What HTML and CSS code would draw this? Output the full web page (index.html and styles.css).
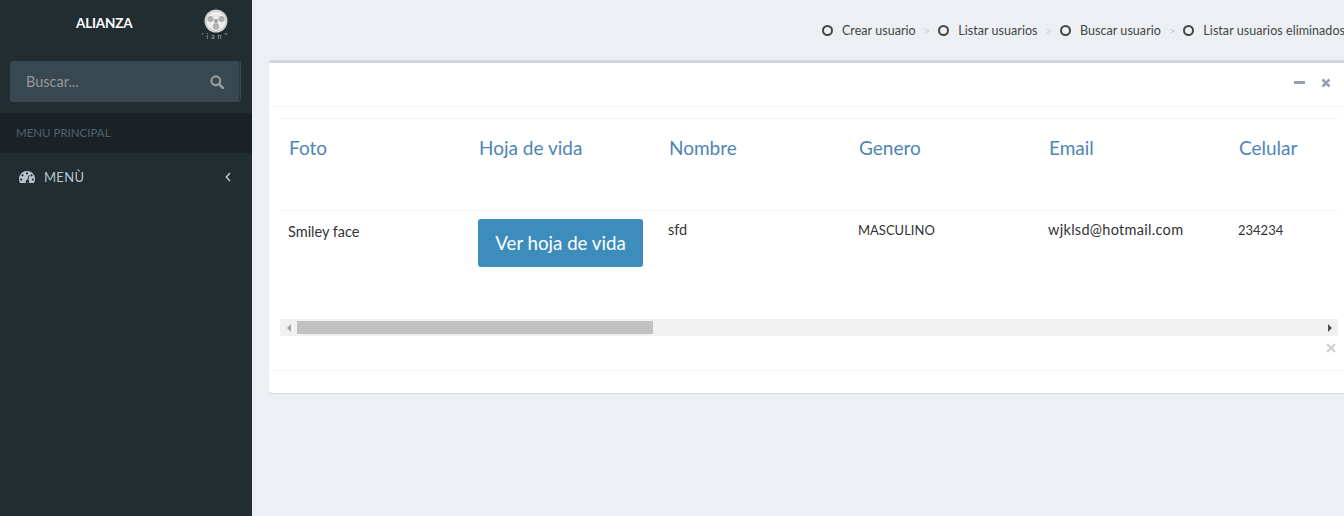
FILE: index.html
```html
<!DOCTYPE html>
<html lang="en">

<head>
    <meta charset="UTF-8">
    <title>Alianza</title>
    <link rel="stylesheet" href="styles.css">
</head>

<body>
    <aside class="sidebar">
        <div class="brand">
            <span class="brand-name">ALIANZA</span>
            <div class="brand-logo">
                <svg class="logo-disc" width="24" height="24" viewBox="0 0 24 24">
                    <circle cx="12" cy="12" r="11.500" fill="#cfcfcf"/>
                    <circle cx="12" cy="12" r="9.500" fill="#ececec"/>
                    <circle cx="6.500" cy="10" r="3" fill="#b0b0b0"/>
                    <circle cx="17.500" cy="10" r="3" fill="#b0b0b0"/>
                    <circle cx="12" cy="17.500" r="3.200" fill="#b0b0b0"/>
                    <circle cx="12" cy="12" r="2" fill="#a0a0a0"/>
                </svg>
                <span class="brand-sub">'ian"</span>
            </div>
        </div>
        <form class="search">
            <span class="search-text">Buscar...</span>
            <svg class="search-icon" width="14" height="14" viewBox="0 0 14 14">
                <circle cx="5.800" cy="5.800" r="4.400" fill="none" stroke="#999" stroke-width="2.200"/>
                <line x1="9" y1="9" x2="13" y2="13" stroke="#999" stroke-width="2.600" stroke-linecap="round"/>
            </svg>
        </form>
        <div class="menu-title">MENU PRINCIPAL</div>
        <div class="menu-item">
            <svg class="menu-icon" width="16" height="14" viewBox="0 0 16 14">
                <path fill="#b8c7ce" fill-rule="evenodd" d="M8 1a8 8 0 0 0-8 8c0 1.500.4 2.900 1.100 4h13.800A8 8 0 0 0 16 9a8 8 0 0 0-8-8zM8 2.300a1.100 1.100 0 1 1 0 2.200 1.100 1.100 0 0 1 0-2.200zM3.500 4.200a1.100 1.100 0 1 1 0 2.200 1.100 1.100 0 0 1 0-2.200zM12.500 4.200a1.100 1.100 0 1 1 0 2.200 1.100 1.100 0 0 1 0-2.200zM2.200 8.500a1.100 1.100 0 1 1 0 2.200 1.100 1.100 0 0 1 0-2.200zM13.800 8.500a1.100 1.100 0 1 1 0 2.200 1.100 1.100 0 0 1 0-2.200zM9.700 5l.9.300-1.300 4.600a1.800 1.800 0 1 1-1-.2z"/>
            </svg>
            <span class="menu-label">MENÙ</span>
            <svg class="menu-arrow" width="6" height="10" viewBox="0 0 6 10">
                <path d="M5 1 1.300 5 5 9" fill="none" stroke="#b8c7ce" stroke-width="1.500"/>
            </svg>
        </div>
    </aside>

    <main class="content">
        <nav class="crumbs">
            <a class="crumb"><i class="dot"></i>Crear usuario</a>
            <span class="sep">&gt;</span>
            <a class="crumb"><i class="dot"></i>Listar usuarios</a>
            <span class="sep">&gt;</span>
            <a class="crumb"><i class="dot"></i>Buscar usuario</a>
            <span class="sep">&gt;</span>
            <a class="crumb"><i class="dot"></i>Listar usuarios eliminados</a>
        </nav>

        <section class="box">
            <div class="box-header">
                <span class="tool-min"></span>
                <svg class="tool-close" width="10" height="10" viewBox="0 0 10 10">
                    <path d="M1.500 1.500l7 7M8.500 1.500l-7 7" stroke="#97a0b3" stroke-width="2.600"/>
                </svg>
            </div>
            <div class="box-body">
                <div class="table-wrap">
                    <table class="users">
                        <thead>
                            <tr>
                                <th>Foto</th>
                                <th>Hoja de vida</th>
                                <th>Nombre</th>
                                <th>Genero</th>
                                <th>Email</th>
                                <th>Celular</th>
                            </tr>
                        </thead>
                        <tbody>
                            <tr>
                                <td class="photo">Smiley face</td>
                                <td><button type="button" class="btn">Ver hoja de vida</button></td>
                                <td>sfd</td>
                                <td class="caps">MASCULINO</td>
                                <td class="email">wjklsd@hotmail.com</td>
                                <td class="caps">234234</td>
                            </tr>
                        </tbody>
                    </table>
                </div>
                <div class="scrollbar">
                    <span class="arrow arrow-left"></span>
                    <div class="track"><div class="thumb"></div></div>
                    <span class="arrow arrow-right"></span>
                </div>
                <div class="close-row">
                    <svg width="10" height="10" viewBox="0 0 10 10">
                        <path d="M1 1l8 8M9 1l-8 8" stroke="#d0d0d0" stroke-width="2.200"/>
                    </svg>
                </div>
            </div>
            <div class="box-footer"></div>
        </section>
    </main>
</body>

</html>
```

FILE: styles.css
```css
html,
body {
    height: 100%;
}

body {
    margin: 0;
    display: flex;
    overflow: hidden;
    font-family: Lato, "Noto Sans", Arial, sans-serif;
    font-size: 14px;
    color: #333;
    background: #ecf0f5;
}

.sidebar {
    width: 252px;
    flex: none;
    background: #222d32;
}

.brand {
    height: 61px;
    display: flex;
    justify-content: space-between;
    padding: 9px 19px 0 76px;
    box-sizing: border-box;
}

.brand-name {
    font-size: 13.500px;
    font-weight: 700;
    letter-spacing: -0.2px;
    color: #fff;
    line-height: 28px;
}

.brand-logo {
    width: 34px;
    display: flex;
    flex-direction: column;
    align-items: center;
}

.logo-disc {
    filter: blur(0.5px);
}

.brand-sub {
    font-size: 7px;
    line-height: 7px;
    letter-spacing: 3px;
    color: #aaa;
}

.search {
    height: 41px;
    margin: 0 11px 11px 10px;
    padding: 0 17px 0 16px;
    display: flex;
    align-items: center;
    justify-content: space-between;
    background: #374850;
    border-radius: 3px;
    box-sizing: border-box;
    box-shadow: inset -1px 0 0 #374850, inset -2px 0 0 #2a363c;
}

.search-text {
    color: #999;
    font-size: 14.500px;
}

.menu-title {
    height: 40px;
    line-height: 40px;
    padding-left: 16px;
    font-size: 11.500px;
    color: #4b646f;
    background: #1a2226;
}

.menu-item {
    height: 48px;
    display: flex;
    align-items: center;
    padding: 0 21px 0 19px;
    color: #b8c7ce;
}

.menu-label {
    margin-left: 9px;
    flex: 1;
    font-size: 13px;
    letter-spacing: 0.3px;
}

.content {
    flex: 1;
    min-width: 0;
    overflow: hidden;
    padding-left: 17px;
}

.crumbs {
    height: 60px;
    display: flex;
    align-items: center;
    padding: 1px 0 0 553px;
    box-sizing: border-box;
    font-size: 12.500px;
    letter-spacing: 0.05px;
    white-space: nowrap;
    color: #444;
}

.crumb {
    display: flex;
    align-items: center;
}

.dot {
    width: 7px;
    height: 7px;
    margin-right: 9px;
    border: 2px solid #444;
    border-radius: 50%;
}

.sep {
    margin: 0 8px;
    color: #ccc;
    font-size: 11px;
}

.box {
    width: 1100px;
    height: 333px;
    background: #fff;
    border-top: 3px solid #d2d6de;
    border-radius: 3px;
    box-shadow: 0 1px 1px rgba(0, 0, 0, 0.1);
    box-sizing: border-box;
}

.box-header {
    width: 1075px;
    height: 44px;
    box-sizing: border-box;
    display: flex;
    justify-content: flex-end;
    align-items: center;
    gap: 16px;
    padding: 0 13px 4px 0;
    border-bottom: 1px solid #f4f4f4;
}

.tool-min {
    width: 11px;
    height: 3px;
    background: #97a0b3;
}

.box-body {
    width: 1075px;
    padding: 11px 0 0 11px;
    box-sizing: border-box;
}

.table-wrap {
    width: 1058px;
    height: 201px;
    overflow: hidden;
}

.users {
    border-collapse: collapse;
    table-layout: fixed;
    width: 1140px;
}

.users th,
.users td {
    width: 190px;
    box-sizing: border-box;
    padding: 0 8px;
    text-align: left;
    vertical-align: top;
}

.users thead tr {
    height: 92px;
    border-top: 1px solid #f4f4f4;
    border-bottom: 1px solid #f4f4f4;
}

.users th {
    padding-top: 17px;
    padding-left: 9px;
    font-size: 19px;
    font-weight: 400;
    color: #4e85b5;
}

.users td {
    padding-top: 9px;
    line-height: 20px;
    font-size: 14.500px;
    color: #333;
}

.users td.photo {
    padding-top: 11px;
}

.users td.caps {
    font-size: 13px;
}

.users td.email {
    letter-spacing: 0.3px;
}

.btn {
    display: block;
    width: 165px;
    height: 48px;
    margin-top: -1px;
    padding: 0;
    border: none;
    border-radius: 3px;
    background: #3c8dbc;
    color: #fff;
    font-family: inherit;
    font-size: 18.700px;
}

.scrollbar {
    width: 1058px;
    height: 17px;
    display: flex;
    align-items: center;
    background: #f1f1f1;
}

.track {
    flex: 1;
    height: 13px;
}

.thumb {
    width: 356px;
    height: 13px;
    background: #c1c1c1;
}

.arrow {
    width: 17px;
    flex: none;
    display: flex;
    justify-content: center;
}

.arrow::before {
    content: "";
    border-style: solid;
    border-color: transparent;
    border-width: 4px;
}

.arrow-left::before {
    border-left-width: 0;
    border-right-color: #a3a3a3;
}

.arrow-right::before {
    border-right-width: 0;
    border-left-color: #505050;
}

.close-row {
    height: 35px;
    display: flex;
    justify-content: flex-end;
    padding: 7px 8px 0 0;
    box-sizing: border-box;
    border-bottom: 1px solid #f4f4f4;
    margin-left: -11px;
    width: 1075px;
}
```
